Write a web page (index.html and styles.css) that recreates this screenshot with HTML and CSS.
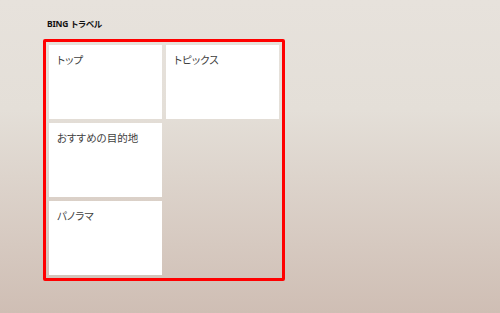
FILE: index.html
```html
<!DOCTYPE html>
<html lang="ja">
<head>
<meta charset="utf-8">
<link rel="stylesheet" href="styles.css">
</head>
<body>
<div class="page">
  <h1 class="title">BING トラベル</h1>
  <div class="frame">
    <div class="grid">
      <div class="tile">トップ</div>
      <div class="tile">トピックス</div>
      <div class="tile">おすすめの目的地</div>
      <div class="spacer"></div>
      <div class="tile">パノラマ</div>
    </div>
  </div>
</div>
</body>
</html>
```
FILE: styles.css
```css
html, body {
  margin: 0;
  padding: 0;
  width: 500px;
  height: 313px;
  overflow: hidden;
}
body {
  background: linear-gradient(to bottom, #e7e2dc 0%, #e4dfd8 35%, #cfbeb4 100%);
  font-family: "Noto Sans CJK JP", "Noto Sans", sans-serif;
  font-feature-settings: "palt";
}
.page {
  padding: 17px 0 0 43px;
}
.title {
  margin: 0 0 8px 4px;
  font-size: 8.5px;
  line-height: 14px;
  font-weight: 700;
  color: #111;
  letter-spacing: -0.2px;
  word-spacing: 1px;
  font-family: "Noto Sans", "Noto Sans CJK JP", sans-serif;
}
.frame {
  width: 236px;
  border: 3px solid #ff0000;
  border-radius: 2px;
}
.grid {
  display: grid;
  grid-template-columns: 113px 113px;
  grid-template-rows: 74px 74px 74px;
  gap: 4px;
  padding: 3px;
}
.tile {
  background: #fff;
  color: #3f3f3f;
  font-size: 10.5px;
  line-height: 14px;
  padding: 8px 0 0 8px;
}
```
